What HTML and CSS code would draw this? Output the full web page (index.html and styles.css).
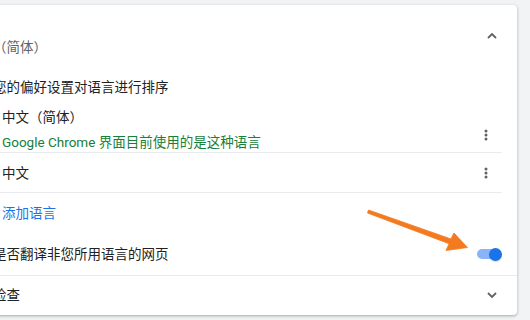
FILE: index.html
```html
<!DOCTYPE html>
<html lang="zh-CN">
<head>
<meta charset="utf-8">
<title>语言设置</title>
<link rel="stylesheet" href="styles.css">
</head>
<body>
<div class="page">
  <section class="card">
    <div class="row header">
      <div class="header-text">（简体）</div>
      <span class="icon-btn chevron-up">
        <svg width="20" height="20" viewBox="0 0 20 20"><path d="M6 12 L10 8 L14 12" fill="none" stroke="#5f6368" stroke-width="1.8"/></svg>
      </span>
    </div>
    <div class="row desc">您的偏好设置对语言进行排序</div>
    <ul class="lang-list">
      <li class="lang-item first">
        <div class="lang-text">
          <div class="lang-name">中文（简体）</div>
          <div class="lang-note">Google Chrome 界面目前使用的是这种语言</div>
        </div>
        <span class="icon-btn dots dots-first">
          <svg width="20" height="20" viewBox="0 0 20 20"><circle cx="10" cy="6" r="1.5" fill="#5f6368"/><circle cx="10" cy="10" r="1.5" fill="#5f6368"/><circle cx="10" cy="14" r="1.5" fill="#5f6368"/></svg>
        </span>
      </li>
      <li class="lang-item second">
        <div class="lang-name">中文</div>
        <span class="icon-btn dots">
          <svg width="20" height="20" viewBox="0 0 20 20"><circle cx="10" cy="6" r="1.5" fill="#5f6368"/><circle cx="10" cy="10" r="1.5" fill="#5f6368"/><circle cx="10" cy="14" r="1.5" fill="#5f6368"/></svg>
        </span>
      </li>
    </ul>
    <div class="row add"><span class="link">添加语言</span></div>
    <div class="row translate">
      <span>是否翻译非您所用语言的网页</span>
      <span class="toggle"><span class="knob"></span></span>
    </div>
    <div class="row spell">
      <span>检查</span>
      <span class="icon-btn chevron-down">
        <svg width="20" height="20" viewBox="0 0 20 20"><path d="M6 8 L10 12 L14 8" fill="none" stroke="#5f6368" stroke-width="1.8"/></svg>
      </span>
    </div>
  </section>
  <svg class="annotation" width="530" height="320" viewBox="0 0 530 320">
    <polygon points="368.5,210 450.9,238.9 454,233 467.5,247.5 446,250.5 449.1,243.7 367.5,213" fill="#f47a20" stroke="#f47a20" stroke-width="0.8" stroke-linejoin="round"/>
  </svg>
</div>
</body>
</html>
```

FILE: styles.css
```css
html, body {
  margin: 0;
  padding: 0;
}
body {
  background: #f1f3f4;
  font-family: Roboto, "Noto Sans CJK SC", sans-serif;
  font-size: 13.5px;
  color: #202124;
  overflow: hidden;
  width: 530px;
  height: 320px;
}
.page {
  position: relative;
  padding-top: 5px;
  height: 315px;
}
.card {
  margin-left: -30px;
  width: 547px;
  height: 310px;
  box-sizing: border-box;
  background: #fff;
  border-radius: 4px;
  box-shadow: 0 1px 2px rgba(60, 64, 67, 0.25), 0 1px 3px 1px rgba(60, 64, 67, 0.12);
}
.row {
  display: flex;
  align-items: center;
  justify-content: space-between;
  padding-left: 23px;
  padding-right: 15px;
  line-height: 20px;
}
.header {
  align-items: flex-start;
  height: 62px;
  box-sizing: border-box;
}
.header-text {
  margin-top: 32px;
  color: #5f6368;
}
.chevron-up {
  margin-top: 21px;
}
.icon-btn {
  display: flex;
  width: 20px;
  height: 20px;
}
.desc {
  padding-top: 10px;
  padding-bottom: 4px;
}
.lang-list {
  list-style: none;
  margin: 0 15px 0 23px;
  padding: 0;
}
.lang-item {
  display: flex;
  justify-content: space-between;
  align-items: center;
  padding-left: 9px;
  padding-right: 6px;
  border-bottom: 1px solid #e8eaed;
  line-height: 20px;
}
.lang-item.first {
  padding-top: 6px;
  height: 52px;
  box-sizing: border-box;
  align-items: flex-start;
}
.lang-note {
  margin-top: 5px;
  color: #188038;
}
.dots-first {
  margin-top: 18px;
}
.lang-item.second {
  padding-top: 10px;
  padding-bottom: 9px;
}
.add {
  padding-top: 10px;
  padding-bottom: 10px;
}
.link {
  padding-left: 9px;
  color: #1a73e8;
}
.translate {
  padding-top: 11px;
  padding-bottom: 11px;
}
.toggle {
  position: relative;
  display: block;
  width: 24px;
  height: 10px;
  border-radius: 5px;
  background: #8ab4f8;
  margin-right: 1px;
}
.knob {
  position: absolute;
  right: -1px;
  top: -1.5px;
  width: 13px;
  height: 13px;
  border-radius: 50%;
  background: #1a73e8;
  box-shadow: 0 1px 1px rgba(0, 0, 0, 0.15);
}
.spell {
  border-top: 1px solid #e8eaed;
  padding-top: 9px;
  padding-bottom: 10px;
}
.annotation {
  position: absolute;
  left: 0;
  top: 0;
  pointer-events: none;
}
```
